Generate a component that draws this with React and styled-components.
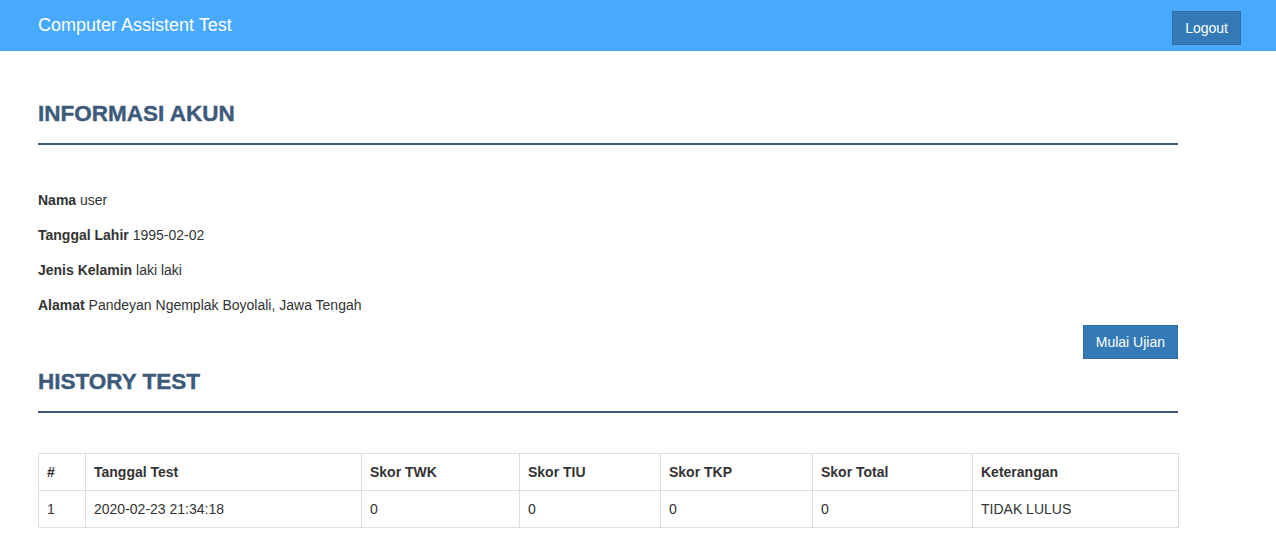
import styled, { createGlobalStyle } from 'styled-components'

const GlobalStyle = createGlobalStyle`
  body {
    margin: 0;
    background: #fff;
    font-family: "Liberation Sans", Arial, sans-serif;
    font-size: 14px;
    line-height: 20px;
    color: #333;
  }
  * { box-sizing: border-box; }
`

const Navbar = styled.nav`
  height: 51px;
  background: #48aafe;
  display: flex;
  justify-content: space-between;
  align-items: flex-start;
  padding: 0 35px 0 38px;
`

const Brand = styled.div`
  font-size: 18px;
  line-height: 20px;
  color: #fff;
  padding-top: 15px;
`

const Button = styled.button`
  font-family: inherit;
  font-size: 14px;
  line-height: 20px;
  color: #fff;
  background: #337ab7;
  border: 1px solid #2e6da4;
  padding: 6px 12px;
  height: 34px;
  margin-top: ${(p) => p.$top || 0}px;
  cursor: pointer;
`

const Main = styled.main`
  width: 1216px;
  padding-left: 38px;
  padding-right: 38px;
`

const Heading = styled.h3`
  margin: ${(p) => p.$top}px 0 0;
  font-size: 22.5px;
  line-height: 25px;
  font-weight: 700;
  color: #3d5a7a;
  -webkit-text-stroke: 0.4px #3d5a7a;
`

const Rule = styled.hr`
  margin: 17px 0 0;
  border: 0;
  height: 2px;
  background: #3f5b7b;
`

const InfoList = styled.div`
  margin-top: 45px;
  display: flex;
  flex-direction: column;
  gap: 15px;
`

const InfoRow = styled.div`
  line-height: 20px;
  b { font-weight: 700; }
`

const Actions = styled.div`
  display: flex;
  justify-content: flex-end;
  margin-top: 10px;
`

const Table = styled.table`
  margin-top: 40px;
  width: 100%;
  border-collapse: collapse;
  table-layout: fixed;
`

const Cell = styled.td`
  border: 1px solid #ddd;
  padding: 8px;
  line-height: 20px;
  text-align: left;
  vertical-align: top;
  font-weight: ${(p) => (p.$head ? 700 : 400)};
`

const columns = [
  ['#', 47],
  ['Tanggal Test', 276],
  ['Skor TWK', 158],
  ['Skor TIU', 141],
  ['Skor TKP', 152],
  ['Skor Total', 160],
  ['Keterangan', 206],
]

const rows = [['1', '2020-02-23 21:34:18', '0', '0', '0', '0', 'TIDAK LULUS']]

const info = [
  ['Nama', 'user'],
  ['Tanggal Lahir', '1995-02-02'],
  ['Jenis Kelamin', 'laki laki'],
  ['Alamat', 'Pandeyan Ngemplak Boyolali, Jawa Tengah'],
]

export default function App() {
  return (
    <>
      <GlobalStyle />
      <Navbar>
        <Brand>Computer Assistent Test</Brand>
        <Button $top={11}>Logout</Button>
      </Navbar>
      <Main>
        <Heading $top={50}>INFORMASI AKUN</Heading>
        <Rule />
        <InfoList>
          {info.map(([label, value]) => (
            <InfoRow key={label}>
              <b>{label}</b> {value}
            </InfoRow>
          ))}
        </InfoList>
        <Actions>
          <Button>Mulai Ujian</Button>
        </Actions>
        <Heading $top={10}>HISTORY TEST</Heading>
        <Rule />
        <Table>
          <colgroup>
            {columns.map(([name, w]) => (
              <col key={name} style={{ width: w }} />
            ))}
          </colgroup>
          <thead>
            <tr>
              {columns.map(([name]) => (
                <Cell as="th" $head key={name}>{name}</Cell>
              ))}
            </tr>
          </thead>
          <tbody>
            {rows.map((r, i) => (
              <tr key={i}>
                {r.map((v, j) => (
                  <Cell key={j}>{v}</Cell>
                ))}
              </tr>
            ))}
          </tbody>
        </Table>
      </Main>
    </>
  )
}
